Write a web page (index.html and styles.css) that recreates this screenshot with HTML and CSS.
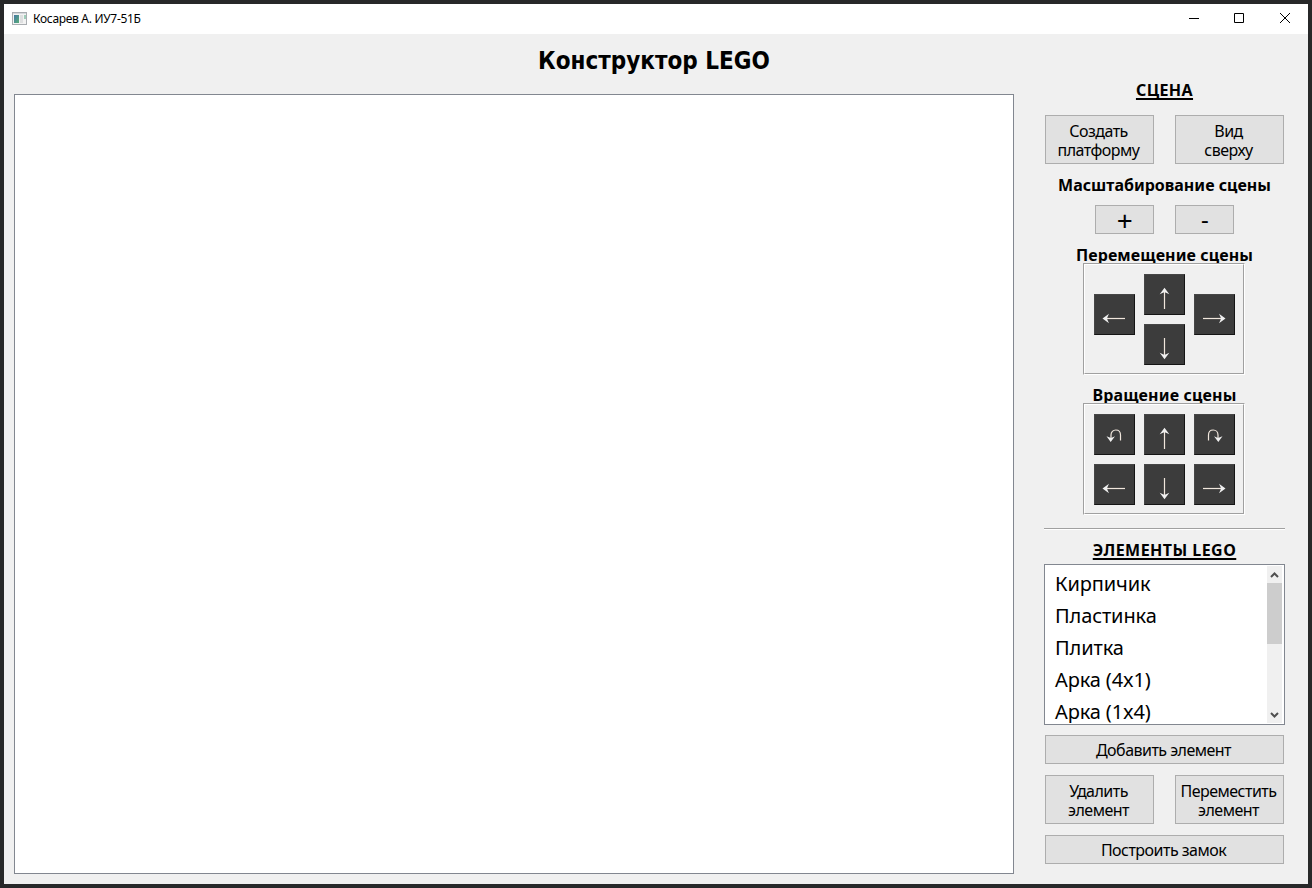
FILE: index.html
```
<!DOCTYPE html>
<html lang="ru">
<head>
<meta charset="utf-8">
<title>Косарев А. ИУ7-51Б</title>
<link rel="stylesheet" href="styles.css">
</head>
<body>
<svg class="defs" width="0" height="0">
  <defs>
    <symbol id="up" viewBox="0 0 39 39"><path class="stroke" d="M19.500 34V15"/><path class="head" d="M19.500 12.800l-4.800 6.500 3.800-1.700h2l3.800 1.700z"/></symbol>
    <symbol id="down" viewBox="0 0 39 39"><path class="stroke" d="M19.500 13v19"/><path class="head" d="M19.500 34.200l-4.800-6.500 3.800 1.700h2l3.800-1.700z"/></symbol>
    <symbol id="left" viewBox="0 0 39 39"><path class="stroke" d="M10 23.500h20"/><path class="head" d="M7.500 23.500l6.500-4.800-1.700 3.800v2l1.700 3.800z"/></symbol>
    <symbol id="right" viewBox="0 0 39 39"><path class="stroke" d="M8 23.500h20"/><path class="head" d="M30.500 23.500l-6.500-4.800 1.700 3.800v2l-1.700 3.800z"/></symbol>
    <symbol id="ccw" viewBox="0 0 39 39"><path class="stroke" d="M25.500 25.500v-5.500c0-3-2-5-4.700-5s-4.800 2-4.800 5v5"/><path class="head" d="M15.700 27l-4.200-5.800 3.800 1.500h1.400l3.300-1.500z"/></symbol>
    <symbol id="cw" viewBox="0 0 39 39"><path class="stroke" d="M13.500 25.500v-5.500c0-3 2-5 4.700-5s4.800 2 4.800 5v5"/><path class="head" d="M23.300 27l4.200-5.800-3.800 1.500h-1.400l-3.300-1.500z"/></symbol>
  </defs>
</svg>
<div class="window">
  <header class="titlebar">
    <svg class="app-icon" width="15" height="13" viewBox="0 0 15 13">
      <defs><linearGradient id="pane" x1="0" y1="0" x2="1" y2="1"><stop offset="0" stop-color="#4779a5"/><stop offset="1" stop-color="#58ad78"/></linearGradient></defs>
      <rect x=".5" y=".5" width="14" height="12" fill="#f3f3f3" stroke="#a9adb1"/>
      <path d="M1 1.500h13" stroke="#d5d8dc"/>
      <rect x="2" y="3" width="5" height="8" fill="url(#pane)"/>
      <rect x="8" y="3" width="3" height="8" fill="#dedfe0"/>
      <rect x="12" y="3" width="2" height="4" fill="#9fcdb9"/>
    </svg>
    <span class="caption">Косарев А. ИУ7-51Б</span>
    <div class="controls">
      <svg width="10" height="10" viewBox="0 0 10 10"><path d="M0 5.500h10"/></svg>
      <svg width="10" height="10" viewBox="0 0 10 10"><path d="M.5.5h9v9h-9z"/></svg>
      <svg width="10" height="10" viewBox="0 0 10 10"><path d="M0 0l10 10M10 0L0 10"/></svg>
    </div>
  </header>
  <main class="content">
    <h1 class="title">Конструктор LEGO</h1>
    <div class="workspace">
      <div class="canvas"></div>
      <aside class="panel">
        <h2 class="section scene">СЦЕНА</h2>
        <div class="row tall">
          <button class="btn">Создать<br>платформу</button>
          <button class="btn">Вид<br>сверху</button>
        </div>
        <h3 class="label t-scale">Масштабирование сцены</h3>
        <div class="row zoom">
          <button class="btn plus">+</button>
          <button class="btn minus">-</button>
        </div>
        <h3 class="label t-move">Перемещение сцены</h3>
        <div class="group"><div class="cross">
          <button class="key w"><svg><use href="#left"/></svg></button>
          <button class="key n"><svg><use href="#up"/></svg></button>
          <button class="key s"><svg><use href="#down"/></svg></button>
          <button class="key e"><svg><use href="#right"/></svg></button>
        </div></div>
        <h3 class="label t-rotate">Вращение сцены</h3>
        <div class="group"><div class="pad">
          <button class="key"><svg><use href="#ccw"/></svg></button>
          <button class="key"><svg><use href="#up"/></svg></button>
          <button class="key"><svg><use href="#cw"/></svg></button>
          <button class="key"><svg><use href="#left"/></svg></button>
          <button class="key"><svg><use href="#down"/></svg></button>
          <button class="key"><svg><use href="#right"/></svg></button>
        </div></div>
        <div class="divider"></div>
        <h2 class="section elements">ЭЛЕМЕНТЫ LEGO</h2>
        <div class="list">
          <ul class="items">
            <li>Кирпичик</li>
            <li>Пластинка</li>
            <li>Плитка</li>
            <li>Арка (4x1)</li>
            <li>Арка (1x4)</li>
          </ul>
          <div class="scrollbar">
            <svg width="15" height="17" viewBox="0 0 15 17"><path d="M4 11l3.500-3.500L11 11"/></svg>
            <div class="thumb"></div>
            <svg width="15" height="17" viewBox="0 0 15 17"><path d="M4 7l3.500 3.500L11 7"/></svg>
          </div>
        </div>
        <button class="btn wide">Добавить элемент</button>
        <div class="row tall actions">
          <button class="btn">Удалить<br>элемент</button>
          <button class="btn">Переместить<br>элемент</button>
        </div>
        <button class="btn wide">Построить замок</button>
      </aside>
    </div>
  </main>
</div>
</body>
</html>
```
FILE: styles.css
```
* { box-sizing: border-box; }
body { margin: 0; height: 888px; padding: 4px; background: #272829; color: #000; overflow: hidden; font-family: "Noto Sans", sans-serif; }
.defs { display: block; position: absolute; }
.window { width: 1304px; height: 880px; background: #f0f0f0; display: flex; flex-direction: column; }
.titlebar { height: 30px; background: #fff; display: flex; align-items: center; padding: 0 18px 2px 8px; }
.app-icon { margin-right: 6px; }
.caption { font-size: 12px; letter-spacing: -0.3px; }
.controls { margin-left: auto; display: flex; gap: 36px; }
.controls svg { fill: none; stroke: #000; stroke-width: 1; }
.controls svg:first-child { margin-right: -1px; }
.content { flex: 1; padding-left: 10px; }
.title { margin: 0; height: 36px; width: 1280px; text-align: center; font: bold 24px/54px "DejaVu Sans Condensed", "DejaVu Sans", sans-serif; white-space: nowrap; }
.workspace { display: flex; gap: 30px; }
.canvas { width: 1000px; height: 780px; margin-top: 24px; background: #fff; border: 1px solid #828790; }
.panel { width: 241px; display: flex; flex-direction: column; align-items: center; }
.section, .label { margin: 0; font: bold 16px/20px "Noto Sans", sans-serif; white-space: nowrap; }
.section { text-decoration: underline; text-decoration-thickness: 2px; text-underline-offset: 2px; text-decoration-skip-ink: none; }
.scene { margin: 10px 0 15px; letter-spacing: 0.4px; }
.elements { letter-spacing: 0.45px; }
.row { display: flex; gap: 21px; }
.btn { width: 109px; padding: 2px 2px 0 0; border: 1px solid #adadad; background: #e1e1e1; color: #000; font: 16px/19px "Noto Sans", sans-serif; letter-spacing: -0.52px; text-align: center; white-space: nowrap; }
.tall .btn { height: 49px; }
.zoom .btn { width: 59px; height: 29px; padding: 0; font-size: 24px; line-height: 27px; }
.zoom .plus { font-size: 28px; line-height: 26px; }
.zoom .minus { line-height: 24px; padding-bottom: 1px; }
.wide { width: 239px; height: 29px; }
.t-scale { margin: 11px 0 10px; }
.t-move { margin-top: 11px; letter-spacing: 0.1px; }
.t-rotate { margin-top: 10px; letter-spacing: 0.15px; }
.group { width: 162px; height: 112px; margin: -2px 2px 0 0; border: 1px solid; border-color: #a0a0a0 #fff #fff #a0a0a0; flex: none; }
.cross, .pad { height: 110px; border: 1px solid; border-color: #fff #a0a0a0 #a0a0a0 #fff; padding: 9px; display: grid; grid-template-columns: repeat(3, 41px); gap: 9px; }
.cross { grid-template-rows: 41px 41px; }
.cross .w { grid-area: 1 / 1 / 3 / 2; align-self: center; margin-top: -10px; }
.cross .e { grid-area: 1 / 3 / 3 / 4; align-self: center; margin-top: -10px; }
.cross .n { grid-area: 1 / 2; }
.cross .s { grid-area: 2 / 2; }
.key { width: 41px; height: 41px; padding: 0; background: #3c3c3c; border: 1px solid; border-color: #464646 #141414 #141414 #464646; }
.key svg { display: block; width: 39px; height: 39px; }
.stroke { fill: none; stroke: #f0e6dc; stroke-width: 1.2; }
.head { fill: #f0f0f0; }
.divider { width: 241px; height: 2px; margin: 13px 0 10px; border-top: 1px solid #a0a0a0; border-bottom: 1px solid #fff; }
.list { width: 241px; height: 161px; margin: 4px 0 10px; border: 1px solid #828790; background: #fff; padding: 1px; display: flex; flex: none; }
.items { list-style: none; margin: 0; padding: 2px 0 0 9px; flex: 1; overflow: hidden; font-size: 20px; line-height: 32px; letter-spacing: -0.12px; }
.items li:last-child { height: 29px; }
.scrollbar { width: 15px; margin-right: 1px; background: #f0f0f0; display: flex; flex-direction: column; }
.scrollbar svg { fill: none; stroke: #505050; stroke-width: 2; flex: none; }
.thumb { height: 61px; background: #cdcdcd; margin-bottom: auto; }
.actions { margin: 11px 0; }
```
